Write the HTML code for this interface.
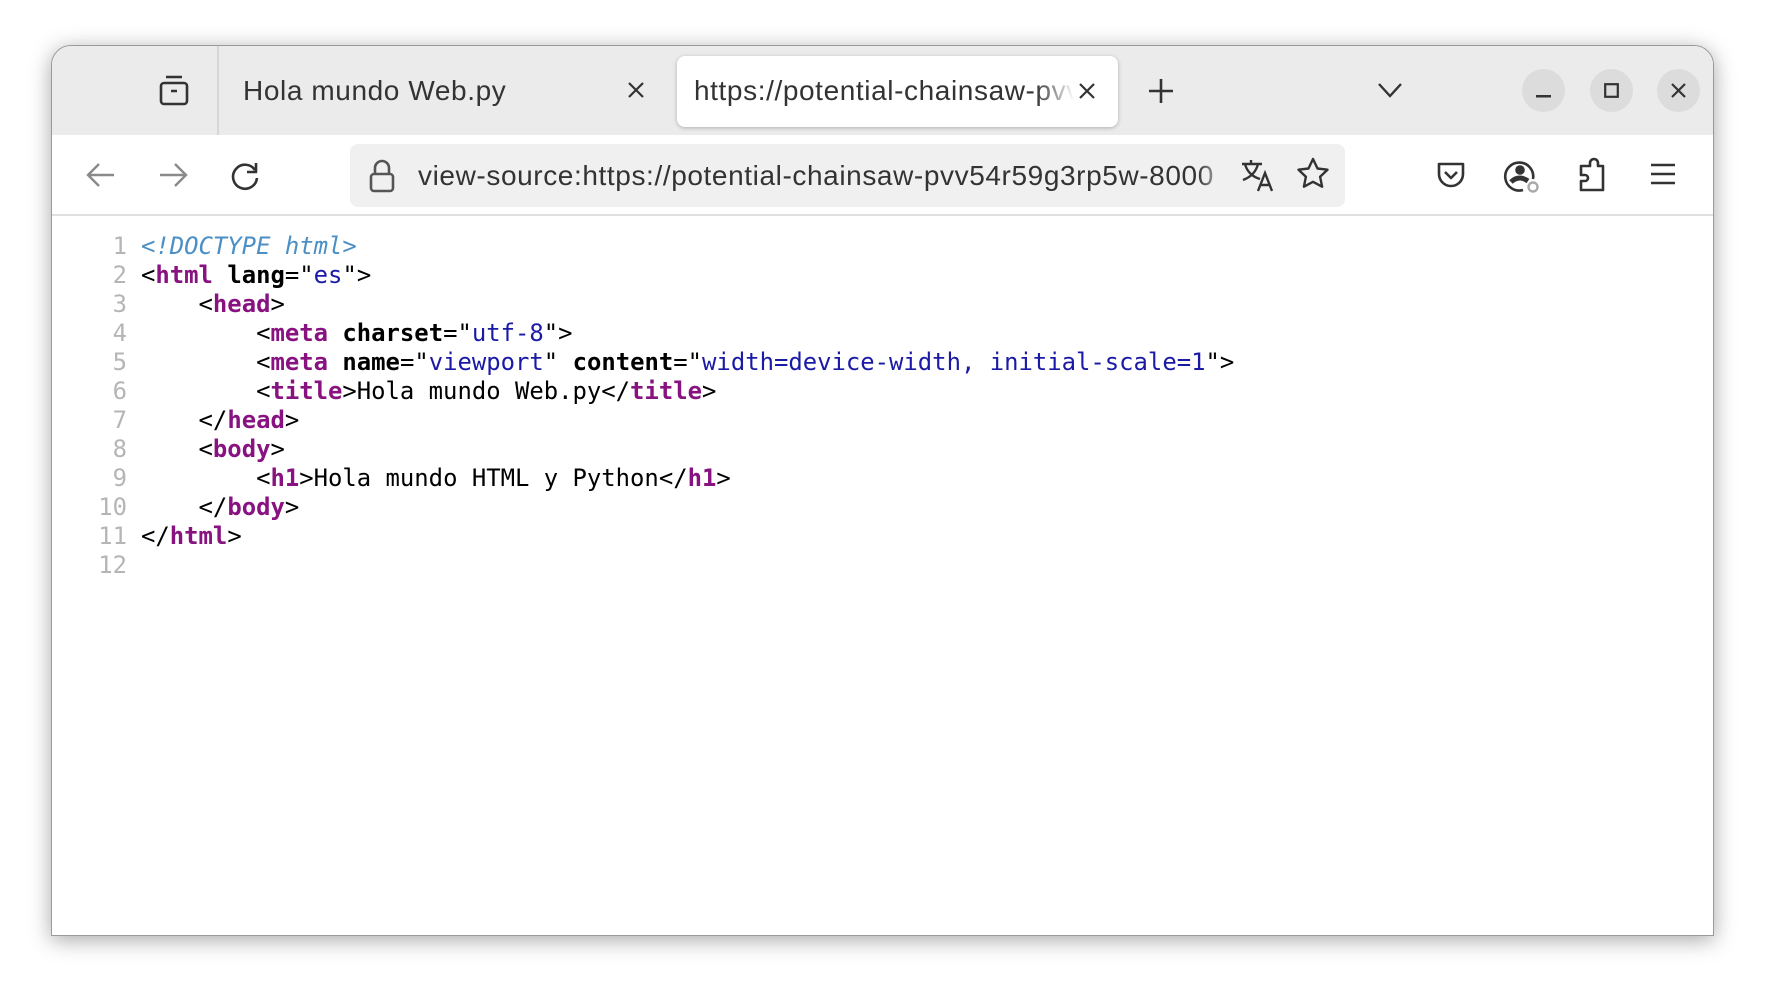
<!DOCTYPE html>
<html><head><meta charset="utf-8"><style>
html,body{margin:0;padding:0;width:1766px;height:994px;background:#fff;overflow:hidden;font-family:"Liberation Sans","DejaVu Sans",sans-serif;}
.win{position:absolute;left:51px;top:45px;width:1663px;height:891px;background:#fff;border-radius:20px 20px 0 0;box-shadow:0 4px 22px rgba(0,0,0,.35);border:1px solid #9a9a9a;overflow:hidden;box-sizing:border-box;}
.tabbar{position:absolute;left:0;top:0;width:100%;height:89px;background:#ebebeb;}
.toolbar{position:absolute;left:0;top:89px;width:100%;height:81px;background:#fff;border-bottom:2px solid #e0e0e0;box-sizing:border-box;}
.abs{position:absolute;}
.tabtxt{font-size:28px;letter-spacing:0.6px;color:#333;white-space:nowrap;}
.atab{position:absolute;left:625px;top:10px;width:441px;height:71px;background:#fff;border-radius:8px;box-shadow:0 1px 4px rgba(0,0,0,.25);overflow:hidden;}
.wbtn{position:absolute;top:23px;width:43px;height:43px;border-radius:50%;background:#dcdcdc;}
.url{position:absolute;left:298px;top:9px;width:995px;height:63px;background:#f0f0f0;border-radius:8px;}
.code{position:absolute;left:0;top:172px;font-family:"DejaVu Sans Mono","Liberation Mono",monospace;font-size:23.9px;line-height:29.1px;}
.ln{position:absolute;left:0;width:75px;text-align:right;color:#b5b5b5;}
.cl{position:absolute;left:89px;white-space:pre;color:#000;}
.t{color:#881280;font-weight:bold}
.a{color:#000;font-weight:bold}
.v{color:#1a1aa6}
.d{color:#4b8fc4;font-style:italic}
svg{position:absolute;}
</style></head><body>
<div class="win">
 <div class="tabbar">
  <svg style="left:105px;top:27px" width="34" height="34" viewBox="0 0 34 34" fill="none" stroke="#333" stroke-width="2.6"><path d="M9 4h16"/><rect x="4" y="10" width="26" height="21" rx="3"/><path d="M14 18h6"/></svg>
  <div class="abs" style="left:165px;top:0;width:2px;height:89px;background:#d6d6d6"></div>
  <div class="abs tabtxt" style="left:191px;top:29px">Hola mundo Web.py</div>
  <svg style="left:574px;top:34px" width="20" height="20" viewBox="0 0 20 20" stroke="#333" stroke-width="2.2"><path d="M3 3l14 14M17 3L3 17"/></svg>
  <div class="atab">
   <div class="abs tabtxt" style="left:17px;top:19px;width:380px;overflow:hidden;-webkit-mask-image:linear-gradient(90deg,#000 90%,transparent);">https://potential-chainsaw-pvv54r59g3rp5w</div>
   <svg style="left:400px;top:25px" width="20" height="20" viewBox="0 0 20 20" stroke="#333" stroke-width="2.2"><path d="M3 3l14 14M17 3L3 17"/></svg>
  </div>
  <svg style="left:1095px;top:31px" width="28" height="28" viewBox="0 0 28 28" stroke="#333" stroke-width="2.6"><path d="M14 2v24M2 14h24"/></svg>
  <svg style="left:1325px;top:35px" width="26" height="18" viewBox="0 0 26 18" fill="none" stroke="#333" stroke-width="2.4"><path d="M2 3l11 12 11-12"/></svg>
  <div class="wbtn" style="left:1470px"><svg style="left:14px;top:26px" width="15" height="3"><rect width="15" height="2.5" fill="#333"/></svg></div>
  <div class="wbtn" style="left:1538px"><svg style="left:14px;top:14px" width="15" height="15" viewBox="0 0 15 15" fill="none" stroke="#333" stroke-width="2.2"><rect x="1.2" y="1.2" width="12.6" height="12.6"/></svg></div>
  <div class="wbtn" style="left:1605px"><svg style="left:13px;top:13px" width="17" height="17" viewBox="0 0 17 17" stroke="#333" stroke-width="2.2"><path d="M2 2l13 13M15 2L2 15"/></svg></div>
 </div>
 <div class="toolbar">
  <svg style="left:34px;top:27px" width="30" height="26" viewBox="0 0 30 26" fill="none" stroke="#8a8a8a" stroke-width="2.4"><path d="M28 13H3M13 2L2 13l11 11"/></svg>
  <svg style="left:106px;top:27px" width="30" height="26" viewBox="0 0 30 26" fill="none" stroke="#8a8a8a" stroke-width="2.4"><path d="M2 13h25M17 2l11 11-11 11"/></svg>
  <svg style="left:177px;top:25px" width="32" height="32" viewBox="0 0 32 32" fill="none" stroke="#333" stroke-width="2.6"><path d="M26 10A12 12 0 1 0 28 18"/><path d="M27 3v9h-9" stroke-linejoin="round"/></svg>
  <div class="url">
   <svg style="left:17px;top:15px" width="30" height="34" viewBox="0 0 30 34" fill="none" stroke="#555" stroke-width="2.6"><path d="M8 15V9a7 7 0 0 1 14 0v6"/><rect x="4" y="15" width="22" height="17" rx="3"/></svg>
   <div class="abs tabtxt" style="left:68px;top:16px;width:812px;overflow:hidden;color:#333;-webkit-mask-image:linear-gradient(90deg,#000 96%,transparent);">view-source:https://potential-chainsaw-pvv54r59g3rp5w-8000</div>
   <svg style="left:890px;top:14px" width="36" height="34" viewBox="0 0 36 34" fill="none" stroke="#333" stroke-width="2.4"><path d="M2 6h20M11 2v4M5 6c2 8 8 13 15 15M18 6c-2 8-7 13-15 16"/><path d="M18 33l7-18 7 18M21 27h8"/></svg>
   <svg style="left:946px;top:13px" width="34" height="34" viewBox="0 0 34 34" fill="none" stroke="#333" stroke-width="2.4" stroke-linejoin="round"><path d="M17 2l4.5 9.5 10 1.2-7.4 7 2 10L17 24.8 7.9 29.7l2-10-7.4-7 10-1.2z"/></svg>
  </div>
  <svg style="left:1383px;top:24px" width="32" height="32" viewBox="0 0 32 32" fill="none" stroke="#333" stroke-width="2.6" stroke-linejoin="round"><path d="M4 5h24v10a12 12 0 0 1-24 0z"/><path d="M10 13l6 6 6-6"/></svg>
  <svg style="left:1451px;top:22px" width="38" height="38" viewBox="0 0 38 38" fill="none" stroke="#333" stroke-width="2.6"><path d="M30 22A14 14 0 1 0 20 33"/><circle cx="17" cy="13" r="3.5" fill="#333"/><path d="M8 25c3-3 6-4 9-4s5 1 8 3" stroke-width="5"/><circle cx="30" cy="30" r="4.5" stroke="#aaa" stroke-width="2.4"/></svg>
  <svg style="left:1524px;top:22px" width="32" height="36" viewBox="0 0 32 36" fill="none" stroke="#333" stroke-width="2.6" stroke-linejoin="round"><path d="M14 9V6a4 4 0 0 1 8 0v3h5v24H5V24h4a3 3 0 0 0 0-6H5V9z"/></svg>
  <svg style="left:1597px;top:27px" width="28" height="24" viewBox="0 0 28 24" stroke="#333" stroke-width="2.6"><path d="M2 3h24M2 12h24M2 21h24"/></svg>
 </div>
 <div class="code">
  <div class="ln" style="top:14px">1</div><div class="cl" style="top:14px"><span class="d">&lt;!DOCTYPE html&gt;</span></div>
  <div class="ln" style="top:43px">2</div><div class="cl" style="top:43px">&lt;<span class="t">html</span> <span class="a">lang</span>="<span class="v">es</span>"&gt;</div>
  <div class="ln" style="top:72px">3</div><div class="cl" style="top:72px">    &lt;<span class="t">head</span>&gt;</div>
  <div class="ln" style="top:101px">4</div><div class="cl" style="top:101px">        &lt;<span class="t">meta</span> <span class="a">charset</span>="<span class="v">utf-8</span>"&gt;</div>
  <div class="ln" style="top:130px">5</div><div class="cl" style="top:130px">        &lt;<span class="t">meta</span> <span class="a">name</span>="<span class="v">viewport</span>" <span class="a">content</span>="<span class="v">width=device-width, initial-scale=1</span>"&gt;</div>
  <div class="ln" style="top:159px">6</div><div class="cl" style="top:159px">        &lt;<span class="t">title</span>&gt;Hola mundo Web.py&lt;/<span class="t">title</span>&gt;</div>
  <div class="ln" style="top:188px">7</div><div class="cl" style="top:188px">    &lt;/<span class="t">head</span>&gt;</div>
  <div class="ln" style="top:217px">8</div><div class="cl" style="top:217px">    &lt;<span class="t">body</span>&gt;</div>
  <div class="ln" style="top:246px">9</div><div class="cl" style="top:246px">        &lt;<span class="t">h1</span>&gt;Hola mundo HTML y Python&lt;/<span class="t">h1</span>&gt;</div>
  <div class="ln" style="top:275px">10</div><div class="cl" style="top:275px">    &lt;/<span class="t">body</span>&gt;</div>
  <div class="ln" style="top:304px">11</div><div class="cl" style="top:304px">&lt;/<span class="t">html</span>&gt;</div>
  <div class="ln" style="top:333px">12</div>
 </div>
</div>
</body></html>
